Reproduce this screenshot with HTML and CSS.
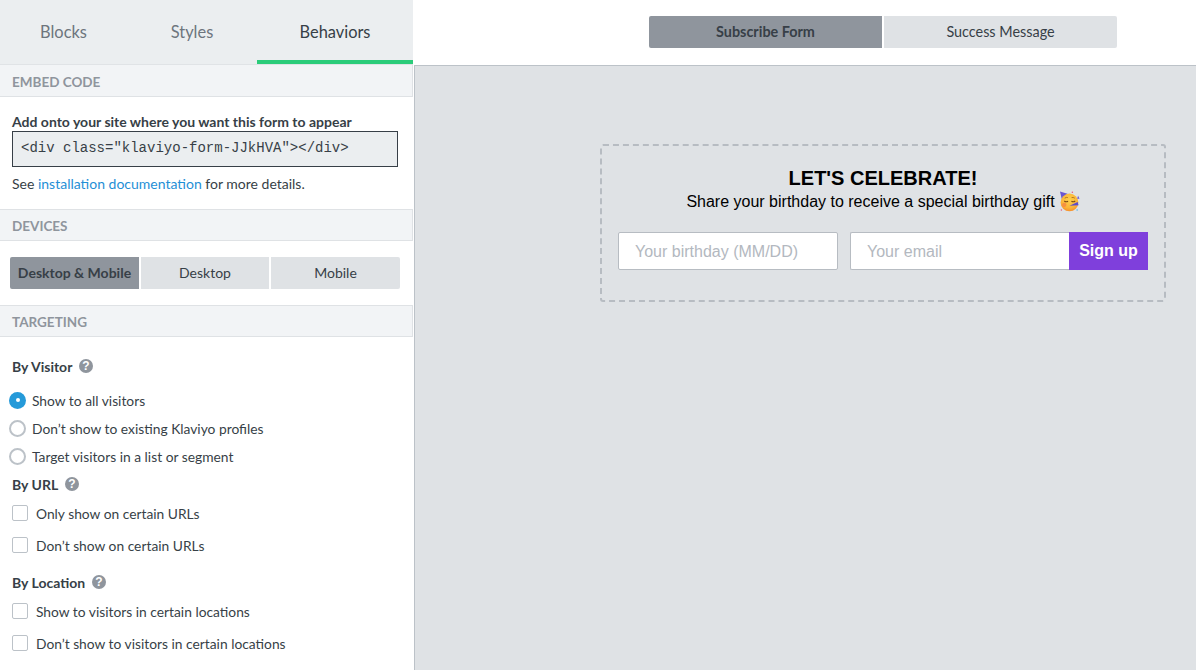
FILE: index.html
```html
<!DOCTYPE html>
<html lang="en">
<head>
<meta charset="utf-8">
<title>Form editor</title>
<link rel="stylesheet" href="styles.css">
</head>
<body>
<div class="app">
  <aside class="sidebar">
    <nav class="tabs">
      <div class="tab tab-blocks">Blocks</div>
      <div class="tab tab-styles">Styles</div>
      <div class="tab tab-behaviors active">Behaviors</div>
    </nav>
    <div class="panel">
      <div class="section-head head-embed">EMBED CODE</div>
      <section class="embed">
        <div class="embed-title">Add onto your site where you want this form to appear</div>
        <div class="code">&lt;div class="klaviyo-form-JJkHVA"&gt;&lt;/div&gt;</div>
        <div class="embed-note">See <a class="link" href="#">installation documentation</a> for more details.</div>
      </section>
      <div class="section-head">DEVICES</div>
      <section class="devices">
        <div class="seg seg-1 selected">Desktop &amp; Mobile</div>
        <div class="seg seg-2">Desktop</div>
        <div class="seg seg-3">Mobile</div>
      </section>
      <div class="section-head">TARGETING</div>
      <section class="targeting">
        <div class="group-title first">By Visitor <svg class="help" viewBox="0 0 14 14"><circle cx="7" cy="7" r="7" fill="#8f959d"/><text x="7" y="11" text-anchor="middle" class="help-q">?</text></svg></div>
        <div class="radios">
          <div class="radio-row"><span class="radio on"></span>Show to all visitors</div>
          <div class="radio-row"><span class="radio"></span>Don’t show to existing Klaviyo profiles</div>
          <div class="radio-row"><span class="radio"></span>Target visitors in a list or segment</div>
        </div>
        <div class="group-title url">By URL <svg class="help" viewBox="0 0 14 14"><circle cx="7" cy="7" r="7" fill="#8f959d"/><text x="7" y="11" text-anchor="middle" class="help-q">?</text></svg></div>
        <div class="check-row"><span class="check"></span>Only show on certain URLs</div>
        <div class="check-row"><span class="check"></span>Don’t show on certain URLs</div>
        <div class="group-title loc">By Location <svg class="help" viewBox="0 0 14 14"><circle cx="7" cy="7" r="7" fill="#8f959d"/><text x="7" y="11" text-anchor="middle" class="help-q">?</text></svg></div>
        <div class="check-row"><span class="check"></span>Show to visitors in certain locations</div>
        <div class="check-row"><span class="check"></span>Don’t show to visitors in certain locations</div>
      </section>
    </div>
  </aside>
  <main class="main">
    <header class="topbar">
      <div class="top-btn top-1 selected">Subscribe Form</div>
      <div class="top-btn top-2">Success Message</div>
    </header>
    <div class="canvas">
      <div class="form-box">
        <h1 class="form-title">LET'S CELEBRATE!</h1>
        <p class="form-sub">Share your birthday to receive a special birthday gift <svg class="emoji" viewBox="0 0 22 22">
          <defs><radialGradient id="face" cx="50%" cy="35%" r="65%"><stop offset="0" stop-color="#fdd04f"/><stop offset=".7" stop-color="#fbb538"/><stop offset="1" stop-color="#f58f2c"/></radialGradient></defs>
          <path d="M1 0.500 L9 3 L3 9 Z" fill="#6a57d2"/>
          <circle cx="11" cy="12" r="9.300" fill="url(#face)"/>
          <circle cx="5.500" cy="14.500" r="2.300" fill="#f47f45" opacity=".7"/>
          <path d="M5.500 10.500 q2 1.500 4 .2 M13 10.700 q2 1.300 4 -.2" stroke="#7a4a16" stroke-width="1.100" fill="none"/>
          <path d="M6 7.500 q1.700 -1.200 3.300 -.6 M13.200 6.900 q1.700 -.6 3.300 .6" stroke="#a86a1c" stroke-width=".9" fill="none"/>
          <path d="M11 15.500 L19.500 11.500 L20.500 15 Z" fill="#5b4ccc"/>
          <path d="M20 5 L21.500 8 L19 8 Z" fill="#6a57d2"/>
          <circle cx="2.500" cy="20" r=".8" fill="#e8557a"/><circle cx="19" cy="20" r=".8" fill="#4fb3e8"/><circle cx="14" cy="1.200" r=".8" fill="#e8557a"/>
        </svg></p>
        <div class="form-row">
          <div class="input input-birthday">Your birthday (MM/DD)</div>
          <div class="input input-email">Your email</div>
          <div class="signup">Sign up</div>
        </div>
      </div>
    </div>
  </main>
</div>
</body>
</html>
```
FILE: styles.css
```css
* { box-sizing: border-box; }
html, body { margin: 0; height: 100%; }
body { font-family: Lato, "Open Sans", sans-serif; color: #373f47; background: #fff; overflow: hidden; }
.app { display: flex; width: 1196px; height: 670px; }
.sidebar { width: 415px; flex: none; height: 670px; display: flex; flex-direction: column; overflow: hidden; }
.tabs { display: flex; flex: none; width: 413px; height: 65px; background: #ebeef0; border-bottom: 1px solid #e0e3e6; }
.tab { height: 64px; font-size: 16.400px; color: #6d757d; text-align: center; line-height: 63px; }
.tab-blocks { width: 127px; }
.tab-styles { width: 130px; }
.tab-behaviors { width: 156px; color: #373f47; border-bottom: 4px solid #2bcc7a; }
.panel { flex: 1; border-right: 1px solid #bcc2c8; padding-right: 1px; }
.section-head { height: 32px; background: #f2f4f6; border: 1px solid #dfe2e5; border-left: 0; font-size: 13.500px; font-weight: 700; color: #8f959d; padding-left: 12px; line-height: 32px; }
.head-embed { border-top: 0; line-height: 35px; }
.embed { height: 112px; padding: 17px 16px 0 12px; }
.embed-title { font-size: 14px; font-weight: 700; line-height: 16px; }
.code { margin-top: 1px; width: 386px; height: 36px; background: #ebeef0; border: 1px solid #373f47; font-family: "Liberation Mono", monospace; font-size: 14px; line-height: 33px; padding-left: 8px; color: #373f47; }
.embed-note { margin-top: 8px; font-size: 14px; line-height: 18px; }
.link { color: #1f8fd6; text-decoration: none; }
.devices { display: flex; gap: 2px; height: 64px; padding: 16px 0 0 10px; }
.seg { height: 32px; background: #dfe2e5; font-size: 14px; line-height: 32px; text-align: center; }
.seg-1 { width: 129px; border-radius: 2px 0 0 2px; }
.seg-2 { width: 128px; }
.seg-3 { width: 129px; border-radius: 0 2px 2px 0; }
.selected { background: #8f959d; font-weight: 700; color: #373f47; }
.targeting { padding: 0 12px; }
.group-title { display: flex; align-items: center; gap: 7px; font-size: 14px; font-weight: 700; height: 18px; }
.group-title.first { margin-top: 20px; }
.group-title.url { margin-top: 5px; }
.group-title.loc { margin-top: 12px; }
.help { width: 14px; height: 14px; flex: none; }
.help-q { font-family: "Liberation Sans", sans-serif; font-size: 12px; font-weight: 700; fill: #fff; }
.radios { margin: 11px 0 0 -3px; }
.radio-row { display: flex; align-items: center; gap: 6px; height: 28px; font-size: 13.800px; }
.radio { width: 17px; height: 17px; border-radius: 50%; border: 2px solid #bcc2c8; background: #fff; flex: none; }
.radio.on { background: #259ad9; border: 0; position: relative; }
.radio.on::after { content: ""; position: absolute; left: 6.500px; top: 6.500px; width: 4px; height: 4px; border-radius: 50%; background: #fff; }
.check-row { display: flex; align-items: center; gap: 8px; height: 32px; font-size: 13.800px; }
.check { width: 16px; height: 16px; border: 1px solid #bcc2c8; border-radius: 2px; background: #fff; flex: none; }
.group-title.url + .check-row { margin-top: 4px; }
.group-title.loc + .check-row { margin-top: 4px; }
.main { flex: 1; display: flex; flex-direction: column; min-width: 0; }
.topbar { height: 66px; flex: none; background: #fff; border-bottom: 1px solid #bcc2c8; display: flex; gap: 2px; padding: 16px 0 0 234px; }
.top-btn { width: 233px; height: 32px; background: #dfe2e5; font-size: 14.400px; line-height: 32px; text-align: center; border-radius: 0 2px 2px 0; }
.top-1 { border-radius: 2px 0 0 2px; background: #8f959d; }
.canvas { flex: 1; background: #dfe2e5; padding: 78px 0 0 185px; }
.form-box { width: 566px; height: 158px; border: 2px dashed #b7bcc2; border-radius: 3px; padding: 20px 16px 0; font-family: "Liberation Sans", Arial, sans-serif; color: #000; text-align: center; }
.form-title { margin: 0; font-size: 20px; font-weight: 700; line-height: 24px; }
.form-sub { margin: 0; font-size: 16px; line-height: 23px; display: flex; justify-content: center; align-items: center; gap: 4px; }
.emoji { width: 21px; height: 21px; flex: none; }
.form-row { display: flex; margin-top: 19px; }
.input { height: 38px; background: #fff; border: 1px solid #b7bcc2; border-radius: 2px; font-size: 16px; line-height: 38px; color: #b3b8c0; text-align: left; padding-left: 16px; }
.input-birthday { width: 220px; margin-right: 12px; }
.input-email { width: 219px; border-radius: 2px 0 0 2px; border-right: 0; }
.signup { width: 79px; height: 38px; background: #7f3fdc; color: #fff; font-size: 16px; font-weight: 700; line-height: 38px; text-align: center; }
```
